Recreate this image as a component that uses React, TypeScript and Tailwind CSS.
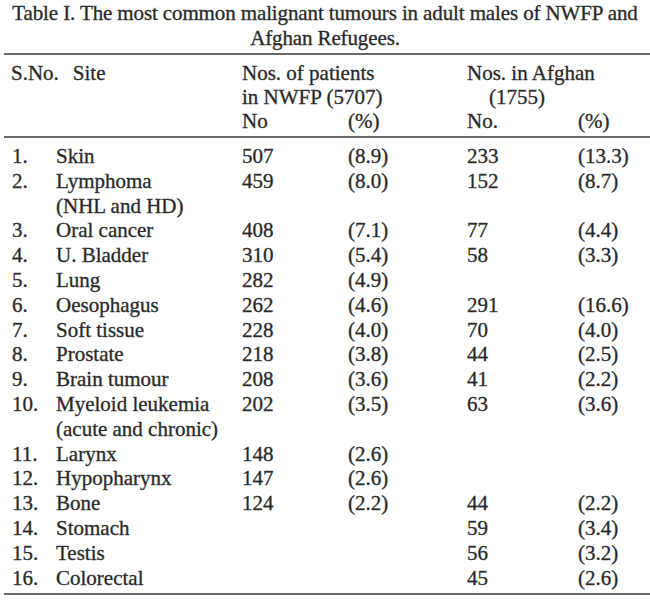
const rows: { n: string; site: string[]; no?: string; pct?: string; afNo?: string; afPct?: string }[] = [
  { n: "1.", site: ["Skin"], no: "507", pct: "(8.9)", afNo: "233", afPct: "(13.3)" },
  { n: "2.", site: ["Lymphoma", "(NHL and HD)"], no: "459", pct: "(8.0)", afNo: "152", afPct: "(8.7)" },
  { n: "3.", site: ["Oral cancer"], no: "408", pct: "(7.1)", afNo: "77", afPct: "(4.4)" },
  { n: "4.", site: ["U. Bladder"], no: "310", pct: "(5.4)", afNo: "58", afPct: "(3.3)" },
  { n: "5.", site: ["Lung"], no: "282", pct: "(4.9)" },
  { n: "6.", site: ["Oesophagus"], no: "262", pct: "(4.6)", afNo: "291", afPct: "(16.6)" },
  { n: "7.", site: ["Soft tissue"], no: "228", pct: "(4.0)", afNo: "70", afPct: "(4.0)" },
  { n: "8.", site: ["Prostate"], no: "218", pct: "(3.8)", afNo: "44", afPct: "(2.5)" },
  { n: "9.", site: ["Brain tumour"], no: "208", pct: "(3.6)", afNo: "41", afPct: "(2.2)" },
  { n: "10.", site: ["Myeloid leukemia", "(acute and chronic)"], no: "202", pct: "(3.5)", afNo: "63", afPct: "(3.6)" },
  { n: "11.", site: ["Larynx"], no: "148", pct: "(2.6)" },
  { n: "12.", site: ["Hypopharynx"], no: "147", pct: "(2.6)" },
  { n: "13.", site: ["Bone"], no: "124", pct: "(2.2)", afNo: "44", afPct: "(2.2)" },
  { n: "14.", site: ["Stomach"], afNo: "59", afPct: "(3.4)" },
  { n: "15.", site: ["Testis"], afNo: "56", afPct: "(3.2)" },
  { n: "16.", site: ["Colorectal"], afNo: "45", afPct: "(2.6)" },
]

const cols = "grid grid-cols-[44px_186px_106px_119px_111px_1fr] pl-[12px]"

export default function App() {
  return (
    <div className="w-[650px] h-[605px] bg-white text-[#262626] text-[21px] overflow-hidden font-['Liberation_Serif','Times_New_Roman',serif] [-webkit-text-stroke:0.35px_#3a3a3a]">
      <div className="pt-px text-center leading-[25px] tracking-[-0.12px]">
        <p>Table I. The most common malignant tumours in adult males of NWFP and</p>
        <p>Afghan Refugees.</p>
      </div>

      <div className="mt-[2px] ml-[4px] h-[2px] bg-[#6a6a6a]" />

      <div className={`${cols} mt-[6px] leading-[24px]`}>
        <div className="col-span-2 flex gap-[14px] -ml-[1px]">
          <span>S.No.</span>
          <span>Site</span>
        </div>
        <div className="col-span-2">
          <p>Nos. of patients</p>
          <p>in NWFP (5707)</p>
        </div>
        <div className="col-span-2">
          <p>Nos. in Afghan</p>
          <p className="pl-[22px]">(1755)</p>
        </div>
        <div className="col-span-2" />
        <div>No</div>
        <div>(%)</div>
        <div>No.</div>
        <div>(%)</div>
      </div>

      <div className="mt-[3px] ml-[4px] h-[2px] bg-[#6a6a6a]" />

      <div className={`${cols} mt-[6px] leading-[24.8px]`}>
        {rows.map((r) => (
          <div key={r.n} className="contents">
            <div>{r.n}</div>
            <div>
              {r.site.map((s) => (
                <p key={s}>{s}</p>
              ))}
            </div>
            <div>{r.no}</div>
            <div>{r.pct}</div>
            <div>{r.afNo}</div>
            <div>{r.afPct}</div>
          </div>
        ))}
      </div>

      <div className="mt-[3px] ml-[4px] h-[2px] bg-[#6a6a6a]" />
    </div>
  )
}
